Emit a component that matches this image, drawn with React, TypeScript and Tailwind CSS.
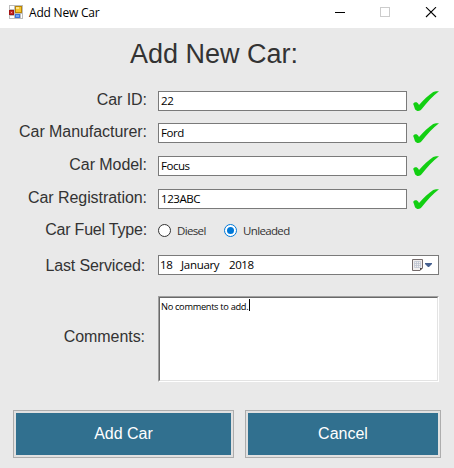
import React from "react";

const ui = "font-['Open_Sans','Noto_Sans',sans-serif]";

function AppIcon() {
  return (
    <svg width="14" height="14" viewBox="0 0 14 14" shapeRendering="crispEdges">
      <rect width="14" height="14" fill="#bdbdbd" />
      <rect x="1" y="1" width="4" height="3" fill="#fff" />
      <rect x="1" y="11" width="4" height="2" fill="#fff" />
      <rect x="12" y="9" width="1" height="4" fill="#fff" />
      <rect x="0" y="5" width="5" height="5" fill="#a11212" />
      <rect x="1" y="6" width="3" height="3" fill="#c92a25" />
      <rect x="2" y="7" width="1" height="1" fill="#f5a09a" />
      <rect x="6" y="1" width="7" height="7" fill="#b98607" />
      <rect x="7" y="2" width="5" height="5" fill="#f5c52e" />
      <rect x="7" y="2" width="3" height="2" fill="#ffe48a" />
      <rect x="6" y="9" width="5" height="4" fill="#3a74d8" />
      <rect x="7" y="10" width="3" height="2" fill="#74a6f4" />
    </svg>
  );
}

function Check() {
  return (
    <svg width="26" height="20" viewBox="0 0 26 20.5" preserveAspectRatio="none" className="ml-[6px] shrink-0">
      <path
        d="M0.2 13.4C0.6 11.8 3 11.1 4.3 12.1C5.2 12.8 5.5 13.6 6 14.3C10.6 9.4 15.3 4.1 20.2 1C21.7 0.1 24.2 0 26 0.3C20 5 14 11.6 9 18.2C7.6 19.9 6.1 20.7 4.4 20.4C2.3 20 1.7 18 1.3 16.4C1 15.4 0.6 14.4 0.2 13.4Z"
        fill="#12cf12"
      />
    </svg>
  );
}

function Label({ children, className = "pr-[11px] pb-[2px] tracking-[-0.06px]" }: { children: React.ReactNode; className?: string }) {
  return (
    <div className={`w-[158px] shrink-0 text-right text-[16px] leading-5 whitespace-nowrap text-[#333] ${className}`}>
      {children}
    </div>
  );
}

const fields = [
  { label: "Car ID:", value: "22", gap: "" },
  { label: "Car Manufacturer:", value: "Ford", gap: "mt-[12px]" },
  { label: "Car Model:", value: "Focus", gap: "mt-[13px]" },
  { label: "Car Registration:", value: "123ABC", gap: "mt-[13px]" },
];

export default function App() {
  return (
    <div className="h-[468px] w-[454px] overflow-hidden bg-[#e9e9e9] font-['Liberation_Sans',Arial,sans-serif]">
      <header className="flex h-7 items-start bg-white pl-[9px]">
        <div className="mt-[5px]"><AppIcon /></div>
        <div className={`ml-[6px] mt-[4px] text-[12px] leading-[18px] tracking-[-0.2px] text-black ${ui}`}>Add New Car</div>
        <div className="ml-auto flex pt-[7px] pr-[16px]">
          <svg width="103" height="11" viewBox="0 0 103 11" fill="none">
            <path d="M0 5.5h10" stroke="#000" />
            <rect x="45.5" y="0.5" width="9" height="9" stroke="#ccc" />
            <path d="M91 0.2l10 9.8M101 0.2l-10 9.8" stroke="#000" strokeWidth="1.1" />
          </svg>
        </div>
      </header>

      <h1 className="mt-[9px] h-[34px] pl-[130px] text-[27px] leading-[34px] text-[#333]">Add New Car:</h1>

      <main className="pt-[20px]">
        {fields.map((f) => (
          <div key={f.label} className={`flex h-5 items-center ${f.gap}`}>
            <Label>{f.label}</Label>
            <div className={`h-5 w-[249px] shrink-0 border border-[#7a7a7a] bg-white pl-[2px] text-[11.5px] leading-[18px] tracking-[-0.45px] text-black ${ui}`}>
              {f.value}
            </div>
            <Check />
          </div>
        ))}

        <div className="mt-[12px] flex h-[19px] items-center">
          <Label className="pr-[11px] pb-px tracking-[-0.2px]">Car Fuel Type:</Label>
          <div className={`flex items-center text-[11.5px] leading-[19px] tracking-[-0.65px] text-[#333] ${ui}`}>
            <span className="h-[13px] w-[13px] rounded-full border border-[#333] bg-white" />
            <span className="ml-[6px] w-[47px]">Diesel</span>
            <span className="flex h-[13px] w-[13px] items-center justify-center rounded-full border border-[#0078d7] bg-white">
              <span className="h-[7px] w-[7px] rounded-full bg-[#0078d7]" />
            </span>
            <span className="ml-[6px]">Unleaded</span>
          </div>
        </div>

        <div className="mt-[15px] flex h-5 items-center">
          <Label className="pt-px pr-[13px] tracking-[-0.13px]">Last Serviced:</Label>
          <div className={`flex h-5 w-[281px] border border-[#7a7a7a] bg-white pl-[1px] text-[11.5px] leading-[18px] tracking-[-0.3px] text-black ${ui}`}>
            <span className="w-[21px]">18</span>
            <span className="w-[48px]">January</span>
            <span className="tracking-[-0.4px]">2018</span>
            <svg className="mt-[3px] mr-[6px] ml-auto" width="20" height="13" viewBox="0 0 20 13">
              <path d="M0.5 0.5h10v8.5l-2.5 2.5h-7.5z" fill="#f1eeee" stroke="#756b6b" />
              <path d="M2.5 2.5h6v6h-6zM4.5 2.5v6M6.5 2.5v6M2.5 4.5h6M2.5 6.5h6" fill="none" stroke="#b9c0ce" strokeWidth="0.7" />
              <path d="M8 11.5V9h2.5z" fill="#4b4343" />
              <path d="M13 4h7v1l-3 3h-1l-3-3z" fill="#46608f" />
            </svg>
          </div>
        </div>

        <div className="mt-[21px] flex h-[86px] items-center">
          <Label className="pr-[13px] pb-[4px] tracking-[-0.06px]">Comments:</Label>
          <div className="h-[86px] w-[281px] border border-t-[#a0a0a0] border-r-white border-b-white border-l-[#a0a0a0]">
            <div className={`flex h-full border border-t-[#696969] border-r-[#e3e3e3] border-b-[#e3e3e3] border-l-[#696969] bg-white pt-px pl-px text-[9.25px] text-black ${ui}`}>
              <span className="w-[88px] pt-px leading-[14px] tracking-[-0.31px] whitespace-nowrap">No comments to add.</span>
              <span className="h-3 w-px bg-black" />
            </div>
          </div>
        </div>

        <div className="mt-[28px] flex gap-[11px] pl-[13px] text-[16px] text-white">
          <button className="h-12 w-[221px] border border-[#adadad] bg-[#e1e1e1] p-[2px]">
            <span className="flex h-full items-center justify-center bg-[#31708f]">Add Car</span>
          </button>
          <button className="h-12 w-[196px] border border-[#adadad] bg-[#e1e1e1] p-[2px]">
            <span className="flex h-full items-center justify-center bg-[#31708f]">Cancel</span>
          </button>
        </div>
      </main>
    </div>
  );
}
